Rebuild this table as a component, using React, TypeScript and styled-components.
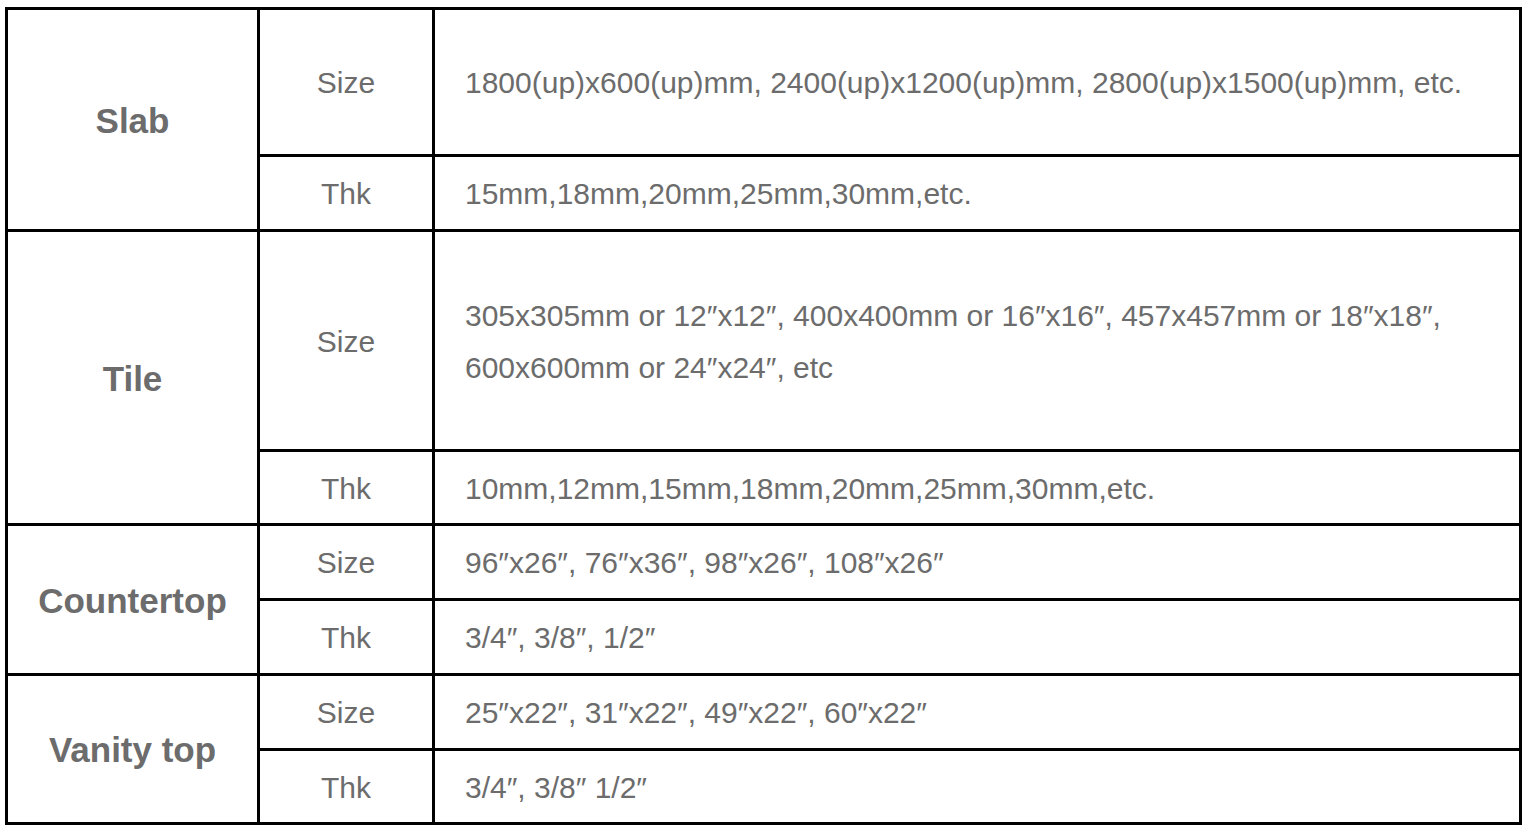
import React from "react";
import styled, { createGlobalStyle } from "styled-components";

const Global = createGlobalStyle`
  html, body { margin: 0; padding: 0; background: #ffffff; }
  body { font-family: "Liberation Sans", Arial, sans-serif; }
`;

const Page = styled.div`
  padding: 7px 0 0 5px;
`;

const Table = styled.div`
  display: grid;
  width: 1517px;
  box-sizing: border-box;
  grid-template-columns: 249px 172px 1fr;
  grid-template-rows: 144px 72px 217px 71px 72px 72px 72px 71px;
  gap: 3px;
  padding: 3px;
  background: #000000;
`;

const Cell = styled.div`
  background: #ffffff;
  display: flex;
  align-items: center;
  color: #6c6c6c;
  font-family: "Liberation Sans", Arial, sans-serif;
  padding-top: 2px;
  box-sizing: border-box;
`;

const Category = styled(Cell)`
  grid-row: span 2;
  justify-content: center;
  font-weight: bold;
  font-size: 35px;
`;

const Attr = styled(Cell)`
  justify-content: center;
  font-size: 30px;
`;

const Value = styled(Cell)`
  justify-content: flex-start;
  padding-left: 30px;
  font-size: 30px;
  line-height: 52px;
  white-space: nowrap;
`;

type Group = { name: string; size: React.ReactNode; thk: string };

const groups: Group[] = [
  {
    name: "Slab",
    size: "1800(up)x600(up)mm, 2400(up)x1200(up)mm, 2800(up)x1500(up)mm, etc.",
    thk: "15mm,18mm,20mm,25mm,30mm,etc.",
  },
  {
    name: "Tile",
    size: (
      <div>
        305x305mm or 12″x12″, 400x400mm or 16″x16″, 457x457mm or 18″x18″,
        <br />
        600x600mm or 24″x24″, etc
      </div>
    ),
    thk: "10mm,12mm,15mm,18mm,20mm,25mm,30mm,etc.",
  },
  {
    name: "Countertop",
    size: "96″x26″, 76″x36″, 98″x26″, 108″x26″",
    thk: "3/4″, 3/8″, 1/2″",
  },
  {
    name: "Vanity top",
    size: "25″x22″, 31″x22″, 49″x22″, 60″x22″",
    thk: "3/4″, 3/8″ 1/2″",
  },
];

export default function App() {
  return (
    <>
      <Global />
      <Page>
        <Table>
          {groups.map((g) => (
            <React.Fragment key={g.name}>
              <Category>{g.name}</Category>
              <Attr>Size</Attr>
              <Value>{g.size}</Value>
              <Attr>Thk</Attr>
              <Value>{g.thk}</Value>
            </React.Fragment>
          ))}
        </Table>
      </Page>
    </>
  );
}
